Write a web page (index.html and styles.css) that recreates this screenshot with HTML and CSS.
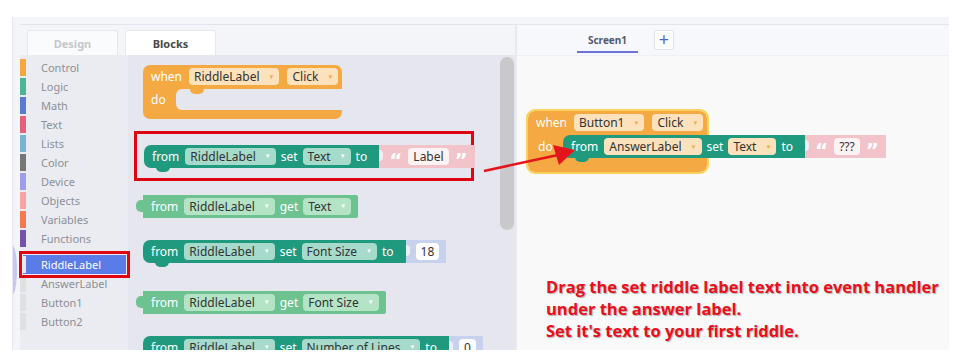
FILE: index.html
```html
<!DOCTYPE html>
<html lang="en">
<head>
    <meta charset="UTF-8">
    <meta name="viewport" content="width=device-width, initial-scale=1.0">
    <title>Blocks editor - Riddle</title>
    <link rel="stylesheet" href="styles.css">
</head>
<body>
    <div class="frame">
        <div class="bubble"></div>
        <div class="app">
            <!-- left side: palette and flyout -->
            <div class="editor">
                <div class="tabs">
                    <div class="tab">Design</div>
                    <div class="tab active">Blocks</div>
                </div>
                <div class="palette">
                    <ul class="cats">
                        <li><span class="strip c-control"></span>Control</li>
                        <li><span class="strip c-logic"></span>Logic</li>
                        <li><span class="strip c-math"></span>Math</li>
                        <li><span class="strip c-text"></span>Text</li>
                        <li><span class="strip c-lists"></span>Lists</li>
                        <li><span class="strip c-color"></span>Color</li>
                        <li><span class="strip c-device"></span>Device</li>
                        <li><span class="strip c-objects"></span>Objects</li>
                        <li><span class="strip c-vars"></span>Variables</li>
                        <li><span class="strip c-funcs"></span>Functions</li>
                        <li class="comp selected"><span class="strip"></span>RiddleLabel</li>
                        <li class="comp"><span class="strip"></span>AnswerLabel</li>
                        <li class="comp"><span class="strip"></span>Button1</li>
                        <li class="comp"><span class="strip"></span>Button2</li>
                    </ul>

                    <div class="flyout">
                        <div class="flyout-body">
                            <div class="event">
                                <div class="ev-row">
                                    <span>when</span>
                                    <span class="fld">RiddleLabel<i>▼</i></span>
                                    <span class="fld">Click<i>▼</i></span>
                                </div>
                                <div class="ev-do">
                                    <span class="do">do</span>
                                    <div class="slot"></div>
                                </div>
                                <div class="ev-foot"></div>
                            </div>

                            <div class="pick">
                                <div class="stmt">
                                    <div class="blk set">
                                        <span>from</span>
                                        <span class="fld">RiddleLabel<i>▼</i></span>
                                        <span>set</span>
                                        <span class="fld">Text<i>▼</i></span>
                                        <span>to</span>
                                    </div>
                                    <div class="val str"><b>“</b><span class="lit">Label</span><b>”</b></div>
                                </div>
                            </div>

                            <div class="stmt gap-a">
                                <div class="blk get">
                                    <span>from</span>
                                    <span class="fld">RiddleLabel<i>▼</i></span>
                                    <span>get</span>
                                    <span class="fld">Text<i>▼</i></span>
                                </div>
                            </div>

                            <div class="stmt gap-b">
                                <div class="blk set">
                                    <span>from</span>
                                    <span class="fld">RiddleLabel<i>▼</i></span>
                                    <span>set</span>
                                    <span class="fld">Font Size<i>▼</i></span>
                                    <span>to</span>
                                </div>
                                <div class="val num"><span class="lit">18</span></div>
                            </div>

                            <div class="stmt gap-c">
                                <div class="blk get">
                                    <span>from</span>
                                    <span class="fld">RiddleLabel<i>▼</i></span>
                                    <span>get</span>
                                    <span class="fld">Font Size<i>▼</i></span>
                                </div>
                            </div>

                            <div class="stmt gap-b">
                                <div class="blk set">
                                    <span>from</span>
                                    <span class="fld">RiddleLabel<i>▼</i></span>
                                    <span>set</span>
                                    <span class="fld">Number of Lines<i>▼</i></span>
                                    <span>to</span>
                                </div>
                                <div class="val num"><span class="lit">0</span></div>
                            </div>
                        </div>
                        <div class="scrollbar"></div>
                    </div>
                </div>
            </div>

            <!-- right side: workspace -->
            <div class="workspace">
                <div class="ws-tabs">
                    <div class="screen-tab">Screen1</div>
                    <div class="add-btn">+</div>
                </div>
                <div class="canvas">
                    <div class="event ws">
                        <div class="ev-row">
                            <span>when</span>
                            <span class="fld">Button1<i>▼</i></span>
                            <span class="fld">Click<i>▼</i></span>
                        </div>
                        <div class="ev-do">
                            <span class="do">do</span>
                            <div class="stmt">
                                <div class="blk set">
                                    <span>from</span>
                                    <span class="fld">AnswerLabel<i>▼</i></span>
                                    <span>set</span>
                                    <span class="fld">Text<i>▼</i></span>
                                    <span>to</span>
                                </div>
                                <div class="val str"><b>“</b><span class="lit">???</span><b>”</b></div>
                            </div>
                        </div>
                        <div class="ev-foot"></div>
                    </div>

                    <p class="note">
                        Drag the set riddle label text into event handler<br>
                        under the answer label.<br>
                        Set it's text to your first riddle.
                    </p>
                </div>
            </div>
        </div>

        <svg class="arrow" width="937" height="333" viewBox="0 0 937 333">
            <line x1="471" y1="154" x2="545" y2="138" stroke="#e3141b" stroke-width="2.5"/>
            <polygon points="562,133 540,128 546,148" fill="#e3141b"/>
        </svg>
    </div>
</body>
</html>
```

FILE: styles.css
```css
body {
    margin: 0;
    background: #fff;
    font-family: "Noto Sans", "Open Sans", sans-serif;
}

.frame {
    position: relative;
    margin: 17px 0 0 12px;
    width: 937px;
    height: 333px;
    padding: 7px 0 0 7px;
    box-sizing: border-box;
    background: #f4f5f9;
    border-left: 1px solid #e6e8ef;
    display: flex;
    overflow: hidden;
}

.app {
    flex: 1;
    display: flex;
    border-top: 1px solid #e3e5ee;
}

/* left side */
.editor {
    width: 495px;
    display: flex;
    flex-direction: column;
}

.tabs {
    height: 30px;
    padding: 5px 0 0 7px;
    box-sizing: border-box;
    display: flex;
    gap: 7px;
}

.tab {
    width: 91px;
    height: 25px;
    box-sizing: border-box;
    border: 1px solid #e6e8ef;
    border-bottom: none;
    border-radius: 3px 3px 0 0;
    background: #fafbfd;
    color: #c4c6cc;
    font-size: 11px;
    font-weight: 700;
    display: flex;
    align-items: center;
    justify-content: center;
}

.tab.active {
    background: #fff;
    color: #4a4a4a;
}

.palette {
    flex: 1;
    display: flex;
}

.cats {
    list-style: none;
    margin: 0;
    padding: 3px 0 0 0;
    width: 108px;
    background: #eaecf2;
}

.cats li {
    height: 19px;
    display: flex;
    align-items: center;
    color: #8d8f95;
    font-size: 11px;
}

.strip {
    width: 6px;
    height: 17px;
    margin-right: 15px;
    background: #e0e0e3;
}

.c-control { background: #f4a640; }
.c-logic { background: #4bb596; }
.c-math { background: #5b7bd2; }
.c-text { background: #e2627b; }
.c-lists { background: #7ab3d2; }
.c-color { background: #767676; }
.c-device { background: #9e9de9; }
.c-objects { background: #f5a3a3; }
.c-vars { background: #f37a50; }
.c-funcs { background: #7752a7; }

.cats li.selected {
    position: relative;
    margin: 7px 2px 0 3px;
    color: #fff;
    background: #5b7be8;
    outline: 3px solid #e0060f;
    outline-offset: 1px;
}

.cats li.selected .strip {
    width: 3px;
    margin-right: 15px;
    background: #e8e8f4;
}

.flyout {
    flex: 1;
    display: flex;
    background: #e5e6ee;
}

.flyout-body {
    flex: 1;
    padding: 9px 0 0 15px;
}

.scrollbar {
    width: 14px;
    height: 173px;
    margin: 2px 1px 0 0;
    border-radius: 7px;
    background: #c9c9cb;
}

/* blocks */
.event {
    display: inline-flex;
    flex-direction: column;
    background: #f4a942;
    border-radius: 7px;
    color: #fff;
    font-size: 12px;
}

.ev-row {
    height: 24px;
    display: flex;
    align-items: center;
    gap: 8px;
    padding: 0 4px 0 8px;
}

.ev-row span:first-child {
    margin-right: -1px;
}

.ev-do {
    display: flex;
    align-items: center;
}

.do {
    flex-shrink: 0;
    width: 33px;
    padding-left: 8px;
    box-sizing: border-box;
}

.slot {
    position: relative;
    flex: 1;
    height: 21px;
    background: #e5e6ee;
    border-radius: 6px 0 0 6px;
}

.slot::before {
    content: "";
    position: absolute;
    left: 14px;
    top: 0;
    width: 14px;
    height: 5px;
    background: #f4a942;
    border-radius: 0 0 7px 7px;
}

.ev-foot {
    height: 9px;
}

.fld {
    display: inline-flex;
    align-items: center;
    gap: 9px;
    height: 17px;
    padding: 0 5px;
    border-radius: 4px;
    color: #333;
    background: #a6dacb;
    font-size: 12px;
}

.fld i {
    font-style: normal;
    font-size: 6px;
    color: #fff;
}

.event .fld {
    background: #fbe1bc;
}

.event .fld i {
    color: #f4a942;
}

.stmt {
    display: flex;
    align-items: center;
}

.blk {
    position: relative;
    display: inline-flex;
    align-items: center;
    height: 23px;
    gap: 5px;
    padding: 0 12px 0 8px;
    color: #fff;
    font-size: 12px;
    border-radius: 7px 0 0 7px;
}

.blk > span:first-child {
    margin-right: 1px;
}

.set {
    background: #1f9a7e;
}

.set::after {
    content: "";
    position: absolute;
    left: 12px;
    bottom: -4px;
    width: 14px;
    height: 5px;
    background: #1f9a7e;
    border-radius: 0 0 7px 7px;
}

.get {
    margin-left: 7px;
    padding-right: 7px;
    border-radius: 0 2px 2px 0;
    background: #6cc390;
}

.get::before {
    content: "";
    position: absolute;
    left: -7px;
    top: 5px;
    width: 8px;
    height: 12px;
    background: #6cc390;
    border-radius: 5px 0 0 5px;
}

.get .fld {
    background: #b4e3c6;
}

.val {
    position: relative;
    height: 23px;
    display: inline-flex;
    align-items: center;
    gap: 6px;
    padding: 0 7px 0 10px;
}

.val::before {
    content: "";
    position: absolute;
    left: 0;
    top: 5px;
    width: 4px;
    height: 11px;
    border-radius: 0 4px 4px 0;
    background: #f0f0f4;
}

.str {
    background: #f3c3ca;
    color: #fff;
}

.str b {
    font-family: "DejaVu Sans", sans-serif;
    font-weight: 700;
    font-size: 20px;
    line-height: 1;
    padding-top: 7px;
}

.num {
    background: #c8d1ee;
}

.lit {
    display: inline-flex;
    align-items: center;
    height: 17px;
    padding: 0 5px;
    border-radius: 4px;
    background: #fdf3f4;
    color: #333;
    font-size: 12px;
}

.num .lit {
    background: #fff;
}

.pick {
    width: 340px;
    box-sizing: border-box;
    margin: 12px 0 0 -9px;
    padding: 11px 0 10px 7px;
    border: 3px solid #e0060f;
}

.gap-a { margin-top: 14px; margin-left: -7px; }
.gap-b { margin-top: 22px; }
.gap-c { margin-top: 28px; margin-left: -7px; }

/* right side */
.workspace {
    flex: 1;
    display: flex;
    flex-direction: column;
    border-left: 2px solid #e9eaf0;
}

.ws-tabs {
    height: 30px;
    display: flex;
    align-items: flex-start;
    background: #f7f8fc;
    border-bottom: 1px solid #eef0f5;
}

.screen-tab {
    margin: 0 0 0 60px;
    width: 61px;
    height: 28px;
    box-sizing: border-box;
    padding-top: 8px;
    text-align: center;
    font-size: 10px;
    font-weight: 700;
    color: #555a66;
    border-bottom: 2px solid #6b74d9;
}

.add-btn {
    margin: 5px 0 0 16px;
    width: 20px;
    height: 20px;
    box-sizing: border-box;
    border: 1px solid #dfe2ea;
    border-radius: 3px;
    background: #fff;
    color: #5467c8;
    font-size: 18px;
    line-height: 17px;
    text-align: center;
}

.canvas {
    flex: 1;
    background: #f9f9fa;
    padding: 54px 0 0 11px;
}

.event.ws {
    width: 179px;
    outline: 2px solid #f8d25a;
}

.event.ws .ev-do {
    height: 24px;
}

.event.ws .do {
    width: 35px;
    padding-left: 10px;
}

.event.ws .stmt {
    flex-shrink: 0;
}

.event.ws .ev-foot {
    height: 13px;
}

.note {
    margin: 104px 0 0 18px;
    color: #e8101c;
    font-family: "Open Sans", sans-serif;
    font-weight: 700;
    font-size: 16.5px;
    line-height: 22px;
    text-shadow: 1px 1px 1px rgba(0, 0, 0, 0.3);
}

.bubble {
    position: absolute;
    left: -6px;
    top: 228px;
    width: 10px;
    height: 50px;
    border-radius: 50%;
    background: #c9c6f5;
}

.arrow {
    position: absolute;
    left: 0;
    top: 0;
    pointer-events: none;
}
```
